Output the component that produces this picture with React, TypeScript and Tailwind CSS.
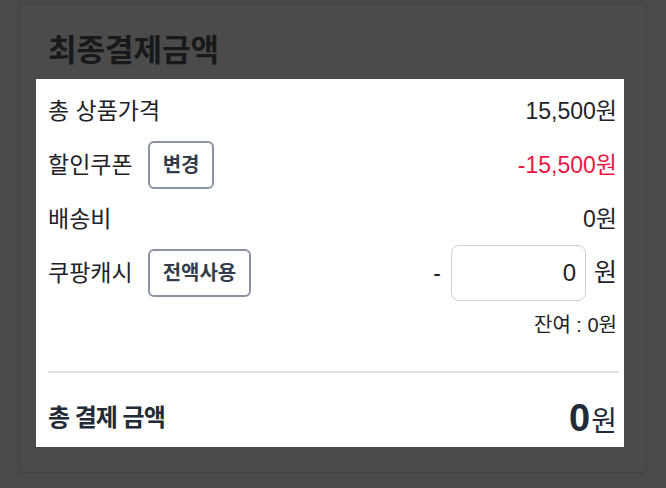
import { useState } from 'react';

const font = { fontFamily: '"Liberation Sans", "Noto Sans CJK KR", sans-serif' };

function OutlineButton({ label }: { label: string }) {
  return (
    <button className="h-[48px] rounded-[6px] border-2 border-[#8b94a3] bg-white px-[13px] text-[20px] font-bold text-[#333d4b]">
      {label}
    </button>
  );
}

function Row({ children }: { children: React.ReactNode }) {
  return <div className="flex h-[54px] items-center justify-between">{children}</div>;
}

export default function App() {
  const [cash, setCash] = useState('0');

  return (
    <div className="h-[488px] w-[666px] overflow-hidden bg-[#4a4a4a] pl-[19px] pt-[3px]" style={font}>
      <div className="h-[470px] w-[628px] rounded-[5px] border border-[#414141] bg-[#4b4b4b] pt-[27px]">
        <h2 className="mb-[8px] h-[40px] pl-[28px] text-[31px] font-bold leading-[40px] text-[#18191b]">
          최종결제금액
        </h2>

        <div className="ml-[16px] w-[588px] bg-white pl-[12px] pr-[7px] pt-[5px] text-[#1f2226]">
          <Row>
            <span className="text-[23px]">총 상품가격</span>
            <span className="text-[23px]">15,500원</span>
          </Row>
          <Row>
            <div className="flex items-center gap-[15px]">
              <span className="text-[23px]">할인쿠폰</span>
              <OutlineButton label="변경" />
            </div>
            <span className="text-[23px] text-[#ea1743]">-15,500원</span>
          </Row>
          <Row>
            <span className="text-[23px]">배송비</span>
            <span className="text-[23px]">0원</span>
          </Row>
          <Row>
            <div className="flex items-center gap-[15px]">
              <span className="text-[23px]">쿠팡캐시</span>
              <OutlineButton label="전액사용" />
            </div>
            <div className="flex items-center">
              <span className="mr-[10px] text-[23px]">-</span>
              <input
                value={cash}
                onChange={(e) => setCash(e.target.value)}
                className="h-[56px] w-[135px] rounded-[8px] border-[1.5px] border-[#cdd1d8] pr-[9px] text-right text-[24px] text-[#1f2226] outline-none"
              />
              <span className="ml-[8px] text-[25px]">원</span>
            </div>
          </Row>
          <div className="mt-[12px] flex h-[26px] items-center justify-end text-[20px]">
            잔여 : 0원
          </div>

          <div className="-mr-[2px] mt-[33px] h-[2px] bg-[#e1e1e1]" />

          <div className="mt-[16px] flex h-[58px] items-center justify-between">
            <span className="text-[24px] font-bold tracking-[-1px] text-[#222a35]">총 결제 금액</span>
            <span className="flex items-baseline text-[#222a35]">
              <span className="text-[38px] font-bold leading-none">0</span>
              <span className="ml-[1px] text-[28px] leading-none">원</span>
            </span>
          </div>
        </div>
      </div>
    </div>
  );
}
